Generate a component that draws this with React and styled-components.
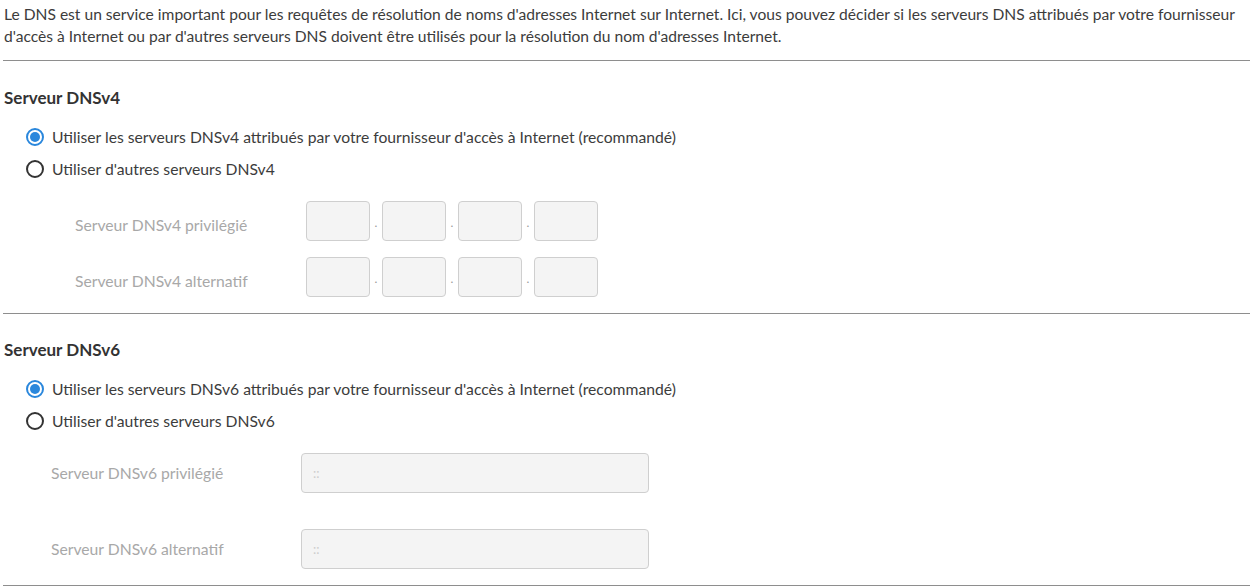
import React, { useState } from 'react';
import styled, { createGlobalStyle } from 'styled-components';

const GlobalStyle = createGlobalStyle`
  body {
    margin: 0;
    background: #fff;
    font-family: Lato, "Open Sans", sans-serif;
    color: #444;
  }
`;

const Page = styled.div`
  width: 1250px;
  padding-left: 3px;
  box-sizing: border-box;
`;

const Intro = styled.p`
  margin: 0;
  padding: 3px 0 0 1px;
  font-size: 15.6px;
  line-height: 22px;
  color: #3c3c3c;
`;

const Divider = styled.hr`
  margin: ${p => p.$top}px 0 0 0;
  border: none;
  border-top: 1px solid #8e8e8e;
  height: 0;
`;

const Heading = styled.h3`
  margin: ${p => p.$top}px 0 0 1px;
  font-size: 17px;
  line-height: 24px;
  font-weight: 700;
  color: #333;
`;

const RadioList = styled.div`
  margin-top: 11px;
  padding-left: 23px;
  display: flex;
  flex-direction: column;
`;

const RadioRow = styled.label`
  display: flex;
  align-items: center;
  height: 32px;
  gap: 8px;
  font-size: 15.7px;
  color: #3c3c3c;
  cursor: pointer;
`;

const RadioDot = styled.span`
  width: 18px;
  height: 18px;
  box-sizing: border-box;
  border-radius: 50%;
  border: 2px solid ${p => (p.$on ? '#2a87dc' : '#333')};
  display: flex;
  align-items: center;
  justify-content: center;
  &::after {
    content: '';
    width: 10px;
    height: 10px;
    border-radius: 50%;
    background: ${p => (p.$on ? '#2a87dc' : 'transparent')};
  }
`;

const FieldGrid = styled.div`
  margin-top: ${p => p.$top}px;
  display: flex;
  flex-direction: column;
  gap: ${p => p.$gap}px;
`;

const FieldRow = styled.div`
  display: flex;
  align-items: center;
  height: 40px;
`;

const FieldLabel = styled.span`
  box-sizing: border-box;
  padding-left: ${p => p.$indent}px;
  width: ${p => p.$width}px;
  font-size: 15.7px;
  color: #a8a8a8;
  padding-top: ${p => p.$drop || 0}px;
`;

const Octets = styled.div`
  display: flex;
  align-items: center;
`;

const Box = styled.input`
  box-sizing: border-box;
  width: ${p => p.$w}px;
  height: 40px;
  border: 1px solid #cfcfcf;
  border-radius: 4px;
  background: #f4f4f4;
  padding: 0 11px;
  font-family: inherit;
  font-size: 13px;
  color: #ccc;
  outline: none;
  &::placeholder {
    color: #cdcdcd;
  }
`;

const Sep = styled.span`
  width: 12px;
  text-align: center;
  font-size: 12px;
  line-height: 1;
  color: #999;
  padding-top: 4px;
`;

function Radios({ version, value, onChange }) {
  const opts = [
    { id: 'isp', text: `Utiliser les serveurs DNSv${version} attribués par votre fournisseur d'accès à Internet (recommandé)` },
    { id: 'other', text: `Utiliser d'autres serveurs DNSv${version}` },
  ];
  return (
    <RadioList>
      {opts.map(o => (
        <RadioRow key={o.id} onClick={() => onChange(o.id)}>
          <RadioDot $on={value === o.id} />
          {o.text}
        </RadioRow>
      ))}
    </RadioList>
  );
}

function Ipv4Field({ label }) {
  return (
    <FieldRow>
      <FieldLabel $indent={72} $width={303} $drop={8}>{label}</FieldLabel>
      <Octets>
        {[0, 1, 2, 3].map(i => (
          <React.Fragment key={i}>
            {i > 0 && <Sep>.</Sep>}
            <Box $w={64} disabled />
          </React.Fragment>
        ))}
      </Octets>
    </FieldRow>
  );
}

function Ipv6Field({ label }) {
  return (
    <FieldRow>
      <FieldLabel $indent={48} $width={298}>{label}</FieldLabel>
      <Box $w={348} placeholder="::" disabled />
    </FieldRow>
  );
}

export default function App() {
  const [v4, setV4] = useState('isp');
  const [v6, setV6] = useState('isp');

  return (
    <Page>
      <GlobalStyle />
      <Intro>
        Le DNS est un service important pour les requêtes de résolution de noms d'adresses Internet sur Internet. Ici, vous pouvez décider si les serveurs DNS attribués par votre fournisseur d'accès à Internet ou par d'autres serveurs DNS doivent être utilisés pour la résolution du nom d'adresses Internet.
      </Intro>
      <Divider $top={13} />

      <Heading $top={25}>Serveur DNSv4</Heading>
      <Radios version={4} value={v4} onChange={setV4} />
      <FieldGrid $top={16} $gap={16}>
        <Ipv4Field label="Serveur DNSv4 privilégié" />
        <Ipv4Field label="Serveur DNSv4 alternatif" />
      </FieldGrid>
      <Divider $top={16} />

      <Heading $top={24}>Serveur DNSv6</Heading>
      <Radios version={6} value={v6} onChange={setV6} />
      <FieldGrid $top={16} $gap={36}>
        <Ipv6Field label="Serveur DNSv6 privilégié" />
        <Ipv6Field label="Serveur DNSv6 alternatif" />
      </FieldGrid>
      <Divider $top={16} />
    </Page>
  );
}
